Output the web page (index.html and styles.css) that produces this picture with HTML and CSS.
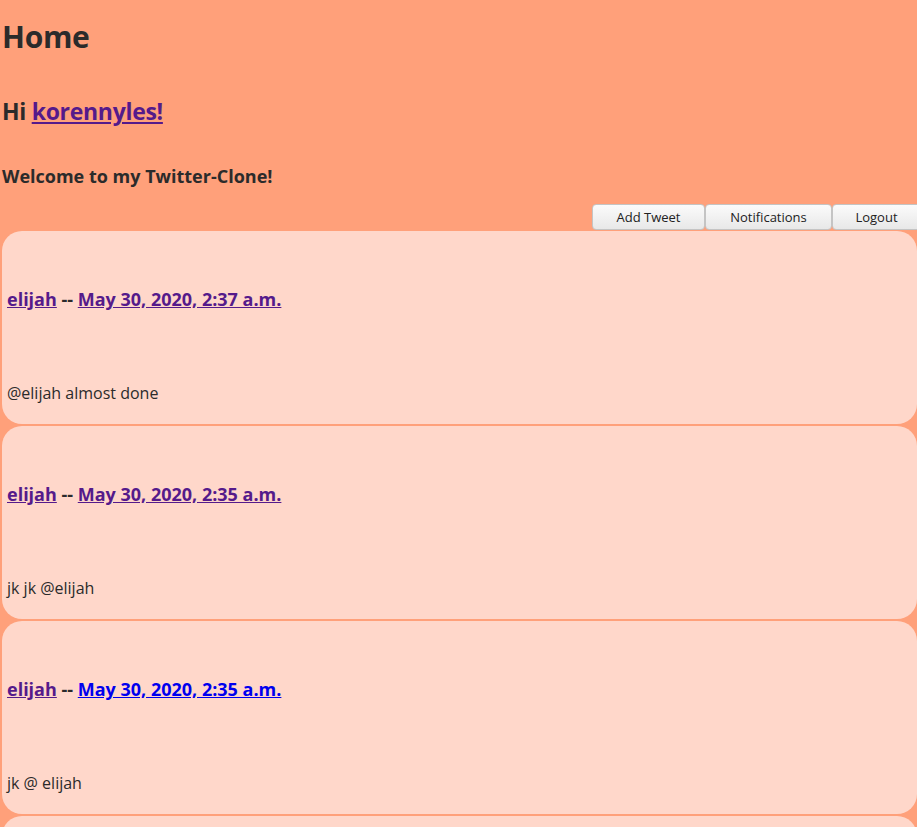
FILE: index.html
```html
<!DOCTYPE html>
<html>
<head>
<meta charset="utf-8">
<title>Home</title>
<link rel="stylesheet" href="styles.css">
</head>
<body>
<h1 class="title">Home</h1>
<h2 class="greeting">Hi <a href="#u" class="visited">korennyles!</a></h2>
<h3 class="welcome">Welcome to my Twitter-Clone!</h3>
<div class="actions">
  <button class="btn btn-add">Add Tweet</button>
  <button class="btn btn-notif">Notifications</button>
  <button class="btn btn-logout">Logout</button>
</div>
<div class="feed">
  <div class="tweet">
    <h3 class="tweet-head"><a href="#e" class="visited">elijah</a> -- <a href="#t1" class="visited">May 30, 2020, 2:37 a.m.</a></h3>
    <p class="tweet-body">@elijah almost done</p>
  </div>
  <div class="tweet">
    <h3 class="tweet-head"><a href="#e" class="visited">elijah</a> -- <a href="#t2" class="visited">May 30, 2020, 2:35 a.m.</a></h3>
    <p class="tweet-body">jk jk @elijah</p>
  </div>
  <div class="tweet">
    <h3 class="tweet-head"><a href="#e" class="visited">elijah</a> -- <a href="#t3" class="fresh">May 30, 2020, 2:35 a.m.</a></h3>
    <p class="tweet-body">jk @ elijah</p>
  </div>
  <div class="tweet">
    <h3 class="tweet-head"><a href="#e" class="visited">elijah</a> -- <a href="#t4" class="fresh">May 30, 2020, 2:30 a.m.</a></h3>
    <p class="tweet-body">hello</p>
  </div>
</div>
</body>
</html>
```

FILE: styles.css
```css
html, body {
  margin: 0;
  padding: 0;
}
body {
  background: #ffa07a;
  color: #2b2b2b;
  font-family: "Open Sans", "Noto Sans", sans-serif;
  overflow: hidden;
}
a.visited { color: #551a8b; }
a.fresh { color: #0000ee; }

.title {
  font-size: 30px;
  font-weight: 700;
  margin: 18px 0 0 2px;
  line-height: 37px;
  letter-spacing: -0.3px;
}
.greeting {
  font-size: 23px;
  font-weight: 700;
  margin: 41px 0 0 2px;
  line-height: 30px;
  letter-spacing: -0.3px;
}
.welcome {
  font-size: 18px;
  font-weight: 700;
  margin: 39px 0 0 2px;
  line-height: 22px;
}
.actions {
  display: flex;
  justify-content: flex-end;
  margin: 17px -4px 0 0;
  height: 27px;
}
.btn {
  font-family: "Open Sans", "DejaVu Sans", sans-serif;
  font-size: 13px;
  color: #222;
  height: 26px;
  border: 1px solid #c4c4c4;
  border-radius: 4px;
  background: linear-gradient(#fbfbfb, #e8e8e8);
  padding: 0;
  margin: 0;
}
.btn-add { width: 113px; }
.btn-notif { width: 127px; }
.btn-logout { width: 89px; }

.feed {
  display: flex;
  flex-direction: column;
  gap: 2px;
}
.tweet {
  background: #ffd7ca;
  border-radius: 20px;
  margin-left: 2px;
  height: 193px;
  padding: 0 5px;
  box-sizing: border-box;
  display: flex;
  flex-direction: column;
}
.tweet-head {
  font-size: 18px;
  font-weight: 700;
  line-height: 22px;
  margin: 57px 0 0 0;
}
.tweet-head a.visited { color: #551a8b; }
.tweet-head a.fresh { color: #0000ee; }
.tweet-body {
  font-size: 16px;
  line-height: 20px;
  margin: 73px 0 0 0;
}
```
